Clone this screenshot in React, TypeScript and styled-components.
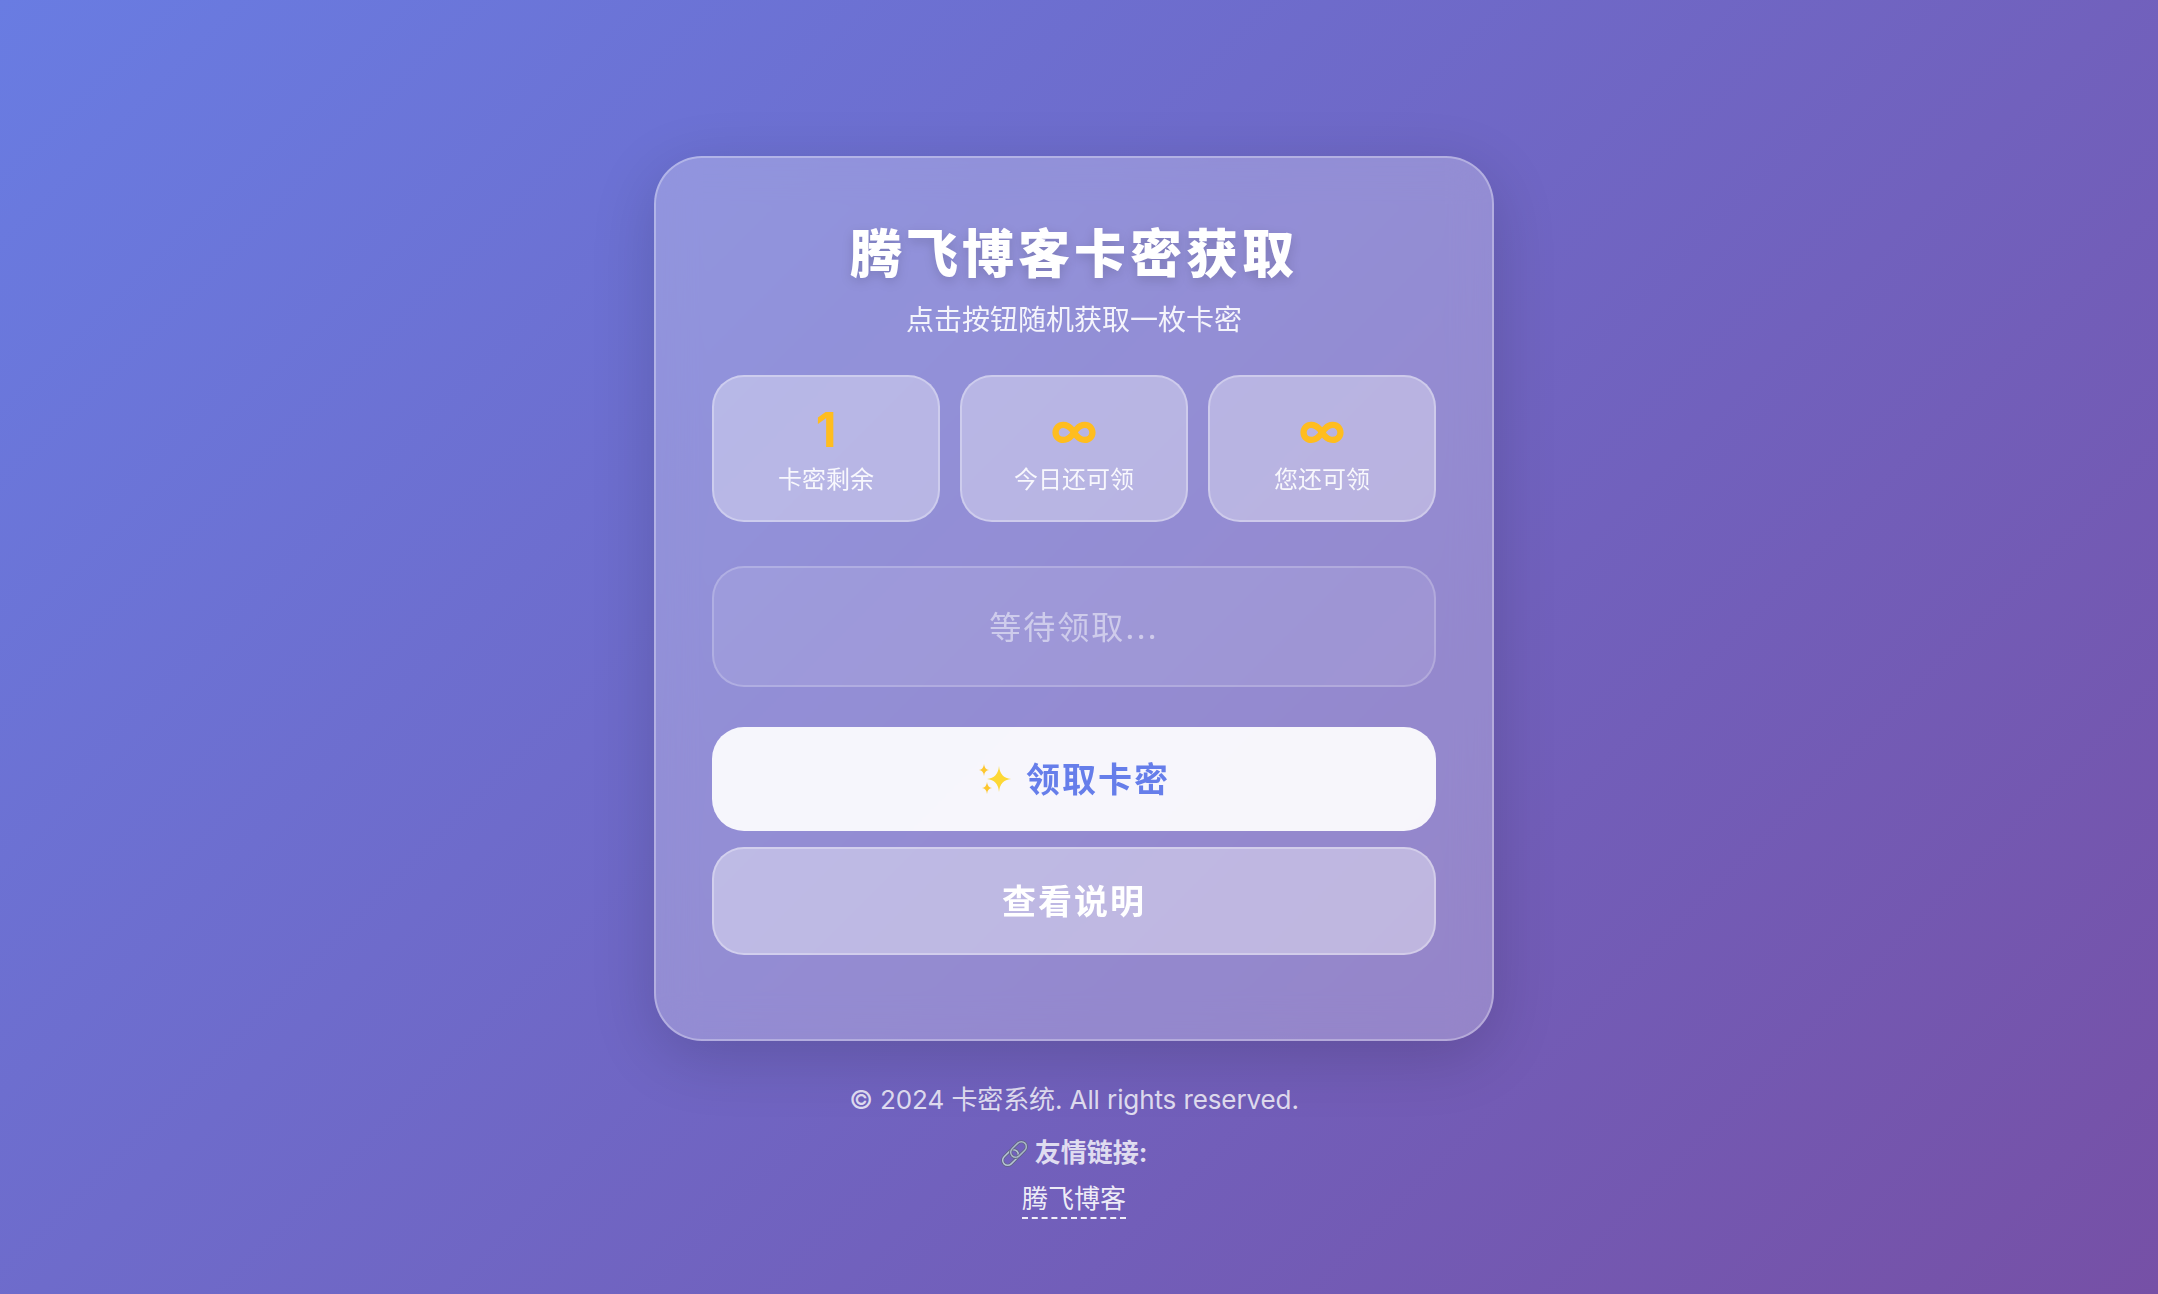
import styled, { createGlobalStyle } from "styled-components";

const GlobalStyle = createGlobalStyle`
  * {
    box-sizing: border-box;
  }
  html, body {
    margin: 0;
    padding: 0;
  }
  body {
    min-height: 100vh;
    background: linear-gradient(135deg, #697ce2 0%, #7650a6 100%);
    font-family: Inter, "Noto Sans CJK SC", "Noto Sans", sans-serif;
    color: #fff;
  }
`;

const Page = styled.main`
  display: flex;
  flex-direction: column;
  align-items: center;
  height: 1294px;
  overflow: hidden;
  padding: 156px 10px 0 0;
`;

const Card = styled.section`
  width: 840px;
  height: 885px;
  padding: 57px 56px 56px;
  background: rgba(255, 255, 255, 0.25);
  backdrop-filter: blur(20px);
  border: 2px solid rgba(255, 255, 255, 0.3);
  border-radius: 48px;
  box-shadow: 0 16px 64px rgba(0, 0, 0, 0.16);
`;

const Title = styled.h1`
  margin: 0 0 3px;
  font-size: 52px;
  line-height: 80px;
  font-weight: 900;
  letter-spacing: 4px;
  text-align: center;
  text-shadow: 0 4px 12px rgba(0, 0, 0, 0.15);
`;

const Subtitle = styled.p`
  margin: 0 0 32px;
  font-size: 28px;
  line-height: 45px;
  text-align: center;
  color: rgba(255, 255, 255, 0.9);
`;

const StatGrid = styled.div`
  display: grid;
  grid-template-columns: repeat(3, 1fr);
  gap: 20px;
  margin-bottom: 44px;
`;

const Stat = styled.div`
  height: 147px;
  padding: 23px 8px;
  text-align: center;
  background: rgba(255, 255, 255, 0.35);
  border: 2px solid rgba(255, 255, 255, 0.3);
  border-radius: 32px;
`;

const StatValue = styled.div`
  font-size: 48px;
  line-height: 60px;
  font-weight: 700;
  color: #ffbd1f;
`;

const StatLabel = styled.div`
  margin-top: 3px;
  font-size: 24px;
  line-height: 34px;
  color: rgba(255, 255, 255, 0.9);
`;

const ResultBox = styled.div`
  display: flex;
  align-items: center;
  justify-content: center;
  height: 121px;
  margin-bottom: 40px;
  padding-bottom: 4px;
  font-size: 32px;
  letter-spacing: 2px;
  color: rgba(255, 255, 255, 0.5);
  background: rgba(255, 255, 255, 0.1);
  border: 2px solid rgba(255, 255, 255, 0.2);
  border-radius: 32px;
`;

const Button = styled.button<{ $primary?: boolean }>`
  display: flex;
  align-items: center;
  justify-content: center;
  gap: 12px;
  width: 100%;
  height: ${(p) => (p.$primary ? "104px" : "108px")};
  margin-bottom: 16px;
  padding: 0 0 4px;
  font-family: inherit;
  font-size: 34px;
  font-weight: 700;
  letter-spacing: 2px;
  cursor: pointer;
  border-radius: 32px;
  color: ${(p) => (p.$primary ? "#667eea" : "#fff")};
  background: ${(p) => (p.$primary ? "rgba(255, 255, 255, 0.92)" : "rgba(255, 255, 255, 0.4)")};
  border: ${(p) => (p.$primary ? "none" : "2px solid rgba(255, 255, 255, 0.3)")};
`;

const SparkleSvg = styled.svg`
  margin-top: 4px;
`;

const Footer = styled.footer`
  display: flex;
  flex-direction: column;
  align-items: center;
  margin-top: 39px;
  font-size: 26px;
  color: rgba(255, 255, 255, 0.8);
`;

const Copy = styled.div`
  line-height: 40px;
  letter-spacing: -0.1px;
`;

const LinksTitle = styled.div`
  display: flex;
  align-items: center;
  gap: 7px;
  margin-top: 13px;
  line-height: 40px;
  font-weight: 700;
`;

const FriendLink = styled.a`
  margin-top: 7px;
  line-height: 37px;
  color: rgba(255, 255, 255, 0.9);
  text-decoration: none;
  border-bottom: 2px dashed rgba(255, 255, 255, 0.9);
`;

const Sparkles = () => (
  <SparkleSvg width="36" height="36" viewBox="0 0 36 36">
    <path d="M21 5Q22 17 33 18Q22 19 21 31Q20 19 9 18Q20 17 21 5z" fill="#fdd835" />
    <path d="M6 3Q6.500 8.500 11 9Q6.500 9.500 6 15Q5.500 9.500 1 9Q5.500 8.500 6 3z" fill="#fdc72f" />
    <path d="M9 21Q9.500 26.500 14 27Q9.500 27.500 9 33Q8.500 27.500 4 27Q8.500 26.500 9 21z" fill="#fdc72f" />
  </SparkleSvg>
);

const LinkIcon = () => (
  <svg width="27" height="27" viewBox="0 0 27 27" fill="none">
    <g transform="rotate(-45 9.500 17.500)">
      <rect x="0.500" y="12.500" width="18" height="10" rx="5" stroke="#5d6579" strokeWidth="3" />
      <rect x="0.500" y="12.500" width="18" height="10" rx="5" stroke="#b7c3d6" strokeWidth="1.500" />
    </g>
    <g transform="rotate(-45 17.500 9.500)">
      <rect x="8.500" y="4.500" width="18" height="10" rx="5" stroke="#5d6579" strokeWidth="3" />
      <rect x="8.500" y="4.500" width="18" height="10" rx="5" stroke="#aab6ca" strokeWidth="1.500" />
    </g>
  </svg>
);

const stats = [
  { value: "1", label: "卡密剩余" },
  { value: "∞", label: "今日还可领" },
  { value: "∞", label: "您还可领" },
];

export default function App() {
  return (
    <>
      <GlobalStyle />
      <Page>
        <Card>
          <Title>腾飞博客卡密获取</Title>
          <Subtitle>点击按钮随机获取一枚卡密</Subtitle>
          <StatGrid>
            {stats.map((s) => (
              <Stat key={s.label}>
                <StatValue>{s.value}</StatValue>
                <StatLabel>{s.label}</StatLabel>
              </Stat>
            ))}
          </StatGrid>
          <ResultBox>等待领取...</ResultBox>
          <Button $primary>
            <Sparkles />
            领取卡密
          </Button>
          <Button>查看说明</Button>
        </Card>
        <Footer>
          <Copy>© 2024 卡密系统. All rights reserved.</Copy>
          <LinksTitle>
            <LinkIcon />
            友情链接:
          </LinksTitle>
          <FriendLink href="#">腾飞博客</FriendLink>
        </Footer>
      </Page>
    </>
  );
}
